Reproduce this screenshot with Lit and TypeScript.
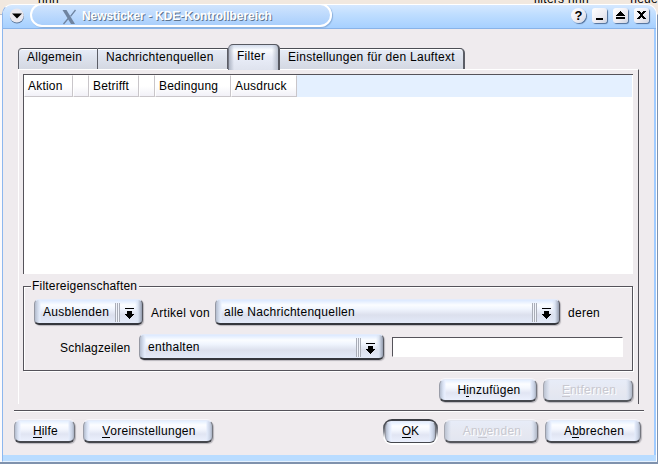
import { LitElement, html, css, svg } from "lit";
import { customElement, property } from "lit/decorators.js";

const textBase = css`
  :host { font: 12px/14px "Liberation Sans", Arial, sans-serif; letter-spacing: 0.27px; color: #000; white-space: nowrap; box-sizing: border-box; }
  * { box-sizing: border-box; }
`;

@customElement("k-button")
class KButton extends LitElement {
  @property() pre = "";
  @property() key = "";
  @property() post = "";
  @property({ type: Boolean, reflect: true }) disabled = false;
  @property({ type: Boolean, reflect: true }) focused = false;
  static styles = [textBase, css`
    :host { display: block; height: 23px; }
    .face {
      height: 23px; border-radius: 6px; display: flex; justify-content: center; padding: 3px 0 0 2px;
      border: 1px solid; border-color: #e4ebf9 #74767e #45474d #9a9da8; border-bottom-width: 2px;
      background: linear-gradient(90deg, #b3bccd 0, #d9e2f3 3px, #eaf0ff 5px, transparent 6px, transparent calc(100% - 6px), #e3ebfb calc(100% - 5px), #c9d2e4 calc(100% - 2px), #a9b1c1 100%),
        linear-gradient(#e4efff 0, #fcfdff 4px, #f4f7fe 8px, #e1e5f3 13px, #ebf0fd 100%);
      box-shadow: 1px 1px 1px #b9b6bc, 0 -1px 0 #f8f6fa;
    }
    u { text-decoration: none; box-shadow: 0 -1px 0 #000 inset; display: inline-block; height: 14px; letter-spacing: 0; }
    :host([disabled]) .face { color: #c8c8d0; text-shadow: 1px 1px 0 #fff; border-color: #e2e5ee #777982 #55575d #a5a7b0;
      background: linear-gradient(90deg, #bcc3d1 0, #d9dfec 4px, transparent 6px, transparent calc(100% - 6px), #dae1ef calc(100% - 4px), #b0b7c6 100%), linear-gradient(#e7ecf8, #e6e8f1 12px, #e2e6f1); }
    :host([disabled]) u { box-shadow: 0 -1px 0 #c8c8d0 inset; }
    :host([focused]) { height: 26px; padding: 2px 2px 3px; border-radius: 9px; margin-bottom: -2px; background: linear-gradient(#3b3d43 0, #55585f 7px, #8b8e97 13px, #fff 19px); }
    :host([focused]) .face { height: 22px; padding: 2px 0 0; border-bottom-width: 1px; box-shadow: none; }
  `];
  render() {
    return html`<div class="face"><span>${this.pre}<u>${this.key}</u>${this.post}</span></div>`;
  }
}

@customElement("k-combo")
class KCombo extends LitElement {
  @property() value = "";
  static styles = [textBase, css`
    :host { display: block; height: 26px; }
    .face {
      height: 26px; border-radius: 5px; display: flex; padding: 5px 8px 0 8px;
      border: solid; border-width: 1px 1px 2px 1px; border-color: #e3ebfb #55575f #34363c #9598a3;
      background: linear-gradient(90deg, #b3bccd 0, #d3dcec 3px, #e6eefc 5px, transparent 6px, transparent calc(100% - 7px), #dbe4f3 calc(100% - 4px), #949cae 100%),
        linear-gradient(#dce9ff 0, #fbfdff 5px, #f0f5fe 9px, #dce0ed 15px, #e3eaf9 100%);
      box-shadow: 1px 1px 1px #b9b6bc;
    }
    .value { flex: 1; }
    .grip { width: 5px; margin: -2px 5px 1px 0; background: repeating-linear-gradient(90deg, #a9adb7 0 1px, #f1f4fb 1px 2px); }
    svg { margin-top: 3px; }
  `];
  render() {
    return html`<div class="face"><span class="value">${this.value}</span><span class="grip"></span>
      <svg width="9" height="12" viewBox="0 0 9 12" shape-rendering="crispEdges"><path d="M0 0H9V1H0zM2 3H7V6H9V7H8V8H7V9H6V10H5V11H4V10H3V9H2V8H1V7H0V6H2z"/></svg></div>`;
  }
}

const glyphs = {
  min: svg`<path d="M5 11h7v2H5z"/>`,
  max: svg`<path d="M8 4h1v1h1v1h1v1h1v1h1v1H4V8h1V7h1V6h1V5h1zM4 10h9v2H4z"/>`,
  close: svg`<path d="M4 4h3v1h1v1h1V5h1V4h3v1h-1v1h-1v1h-1v2h1v1h1v1h1v1h-3v-1H9v-1H8v1H7v1H4v-1h1v-1h1V9h1V7H6V6H5V5H4z"/>`,
};

@customElement("app-root")
class AppRoot extends LitElement {
  static styles = [textBase, css`
    :host { display: block; width: 658px; height: 464px; overflow: hidden; background: #7f92ad; }
    .behind { height: 4px; margin-bottom: -4px; position: relative; background: #f1e8df; overflow: hidden; display: flex; line-height: 12px; }
    .behind span { margin-top: -7px; height: 12px; }
    .b1 { margin-left: 38px; width: 499px; } .b2 { width: 97px; }
    .corner { height: 464px; background: linear-gradient(90deg, #fbfafc 50%, transparent 50%) 0 15px / 100% 447px no-repeat, linear-gradient(#f1e8df 14px, #7f92ad 15px); padding: 4px 1px 2px 2px; }
    .window { height: 458px; border-radius: 10px 10px 0 0; background: #efebee; overflow: hidden; display: flex; flex-direction: column;
      border-left: 1px solid #8db7ee; border-right: 1px solid #fff; border-top: 1px solid #fff; border-bottom: 1px solid #e6f2ff; }
    .title { height: 24px; flex: none; display: flex; border-bottom: 1px solid #89b3e8; padding: 0 7px 0 6px;
      background: linear-gradient(#d5e8ff, #c0deff 9px, #a6d0ff); }
    .round { margin-top: 3px; width: 16px; height: 16px; }
    .pill { margin: -2px 0 0 5px; width: 302px; height: 24px; border: 2px solid #fff; border-radius: 12px; display: flex; padding-left: 30px;
      background: linear-gradient(#d0e4fd, #a9cffc); box-shadow: 1px 1px 1px #89aedb; }
    .pill svg { margin-top: 4px; }
    .pill b { margin: 4px 0 0 5px; color: #fff; letter-spacing: -0.07px; text-shadow: 1px 1px 0 #5e7590; }
    .spring { flex: 1; }
    .tools { display: flex; gap: 6px; margin-top: 3px; }
    .tool { width: 15px; height: 15px; border-radius: 3px; background: linear-gradient(135deg, #fff, #ecebf2 60%, #d0d5e2); box-shadow: 1px 1px 1px #4f6d97; }
    .tool svg { margin-left: -1px; margin-top: -1px; display: block; }
    .help { border-radius: 8px; text-align: center; font: bold 13px/15px "Liberation Sans", sans-serif; letter-spacing: 0; }
    .body { flex: 1; border-right: 2px solid #a0cbff; padding: 15px 10px 0 11px; min-height: 0; }
    .tabs { display: flex; align-items: flex-end; height: 25px; margin-left: 4px; }
    .tab { height: 21px; border-top: 1px solid #4c4e55; border-right: 1px solid #5b5d66; padding: 1px 0 0 8px; box-shadow: 0 1px 0 #fff inset;
      background: linear-gradient(#e8edf8, #dee3ee 8px, #d4d8e2); }
    .tab.first { border-left: 1px solid #5b5d66; border-radius: 4px 0 0 0; }
    .tab.last { border-radius: 0 5px 0 0; border-right-width: 2px; }
    .tab.on { height: 26px; margin-bottom: -1px; border: 2px solid #575961; border-left: 1px solid #747783; border-top-width: 1px; border-bottom: 0; border-radius: 5px 5px 0 0; padding: 4px 0 0 8px; position: relative;
      background: linear-gradient(90deg, #aeb5c4, transparent 5px, transparent 43px, #b8bfcd), linear-gradient(#d3dcec, #fafcff 5px, #e9edf8 12px, #dfe3ee); box-shadow: none; }
    .page { margin-left: 4px; width: 621px; height: 335px; border-left: 1px solid #fff; border-top: 1px solid #fff; border-right: 1px solid #55535a; padding: 4px 5px 0 4px; }
    .list { height: 200px; background: #fff; border-left: 1px solid #55535a; border-top: 1px solid #55535a; }
    .head { height: 22px; background: #e4f0ff; display: flex; margin-right: 1px; }
    .col { height: 22px; border: 1px solid #fff; border-right: 1px solid #c9c6ca; border-bottom: 1px solid #c9c6ca; padding: 3px 0 0 3px; background: linear-gradient(#fff 50%, #f1f0f7); letter-spacing: 0.2px; }
    .group { margin-top: 12px; height: 85px; border: 1px solid #55535a; box-shadow: 1px 1px 0 #fff inset, 1px 1px 0 #fff; padding-left: 7px; width: 610px; }
    .legend { display: table; margin-top: -8px; background: #efebee; padding: 0 2px 0 1px; letter-spacing: 0.2px; }
    .row { display: flex; }
    .r1 { margin: 6px 0 0 3px; } .r2 { margin: 9px 0 0 29px; }
    .lab { margin-top: 7px; }
    .l1 { width: 72px; padding-left: 8px; } .l2 { padding-left: 8px; } .l3 { width: 79px; letter-spacing: 0.2px; }
    .edit { width: 231px; height: 20px; margin: 3px 0 0 8px; background: #fff; border: 1px solid #55535a; border-right-color: #fff; border-bottom-color: #fff; }
    .actions { display: flex; justify-content: flex-end; gap: 6px; margin: 8px 0 0 0; }
    .sep { height: 2px; margin-top: 6px; background: linear-gradient(#55535a 50%, #fff 50%); }
    .buttons { display: flex; margin-top: 7px; align-items: flex-end; }
    .foot { height: 6px; flex: none; background: #b9dcff; }
    .ok{width:55px} .help-btn{width:61px} .remove{width:90px} .apply{width:94px; margin-left:6px} .cancel{width:96px; margin:0 3px 0 7px} .add{width:98px} .defaults{width:130px; margin-left:8px}
    .c1{width:49px} .c2{width:16px} .c3{width:50px} .c5{width:76px} .c6{width:66px}
    .k1{width:109px} .k2{width:345px} .k3{width:245px} .t1{width:80px} .t2{width:130px} .t3{width:52px} .t4{width:185px}
  `];
  render() {
    return html`
      <div class="behind"><span class="b1">nnn</span><span class="b2">filters nnn</span><span>neue</span></div>
      <div class="corner"><div class="window">
        <div class="title">
          <svg class="round" viewBox="0 0 16 16"><circle cx="8" cy="8.5" r="7" fill="#5c789c"/><circle cx="7.8" cy="7.5" r="7" fill="#e9e8ef"/><path d="M3 5.5H13L8 10.5z"/></svg>
          <div class="pill">
            <svg width="15" height="16" viewBox="0 0 15 16"><path d="M0.500 1h4l8.500 14h-4z" fill="#6f84a0"/><path d="M13.500 1L8.500 7.300M6.200 9.500L1.500 15" stroke="#6f84a0" stroke-width="1.300"/></svg>
            <b>Newsticker - KDE-Kontrollbereich</b>
          </div>
          <div class="spring"></div>
          <div class="tools">
            <div class="tool help">?</div>
            ${[glyphs.min, glyphs.max, glyphs.close].map(g => html`<div class="tool"><svg width="16" height="16" viewBox="0 0 16 16" shape-rendering="crispEdges">${g}</svg></div>`)}
          </div>
        </div>
        <div class="body">
          <div class="tabs">
            <div class="tab first t1">Allgemein</div><div class="tab t2">Nachrichtenquellen</div><div class="tab on t3">Filter</div><div class="tab last t4">Einstellungen für den Lauftext</div>
          </div>
          <div class="page">
            <div class="list"><div class="head">
              <div class="col c1">Aktion</div><div class="col c2"></div><div class="col c3">Betrifft</div><div class="col c2"></div><div class="col c5">Bedingung</div><div class="col c6">Ausdruck</div>
            </div></div>
            <div class="group">
              <div class="legend">Filtereigenschaften</div>
              <div class="row r1"><k-combo class="k1" value="Ausblenden"></k-combo><span class="lab l1">Artikel von</span><k-combo class="k2" value="alle Nachrichtenquellen"></k-combo><span class="lab l2">deren</span></div>
              <div class="row r2"><span class="lab l3">Schlagzeilen</span><k-combo class="k3" value="enthalten"></k-combo><div class="edit"></div></div>
            </div>
            <div class="actions"><k-button class="add" pre="H" key="i" post="nzufügen"></k-button><k-button class="remove" disabled key="E" post="ntfernen"></k-button></div>
          </div>
          <div class="sep"></div>
          <div class="buttons">
            <k-button class="help-btn" key="H" post="ilfe"></k-button><k-button class="defaults" key="V" post="oreinstellungen"></k-button>
            <div class="spring"></div>
            <k-button class="ok" focused key="O" post="K"></k-button><k-button class="apply" disabled pre="An" key="w" post="enden"></k-button><k-button class="cancel" pre="A" key="b" post="brechen"></k-button>
          </div>
        </div>
        <div class="foot"></div>
      </div></div>`;
  }
}
